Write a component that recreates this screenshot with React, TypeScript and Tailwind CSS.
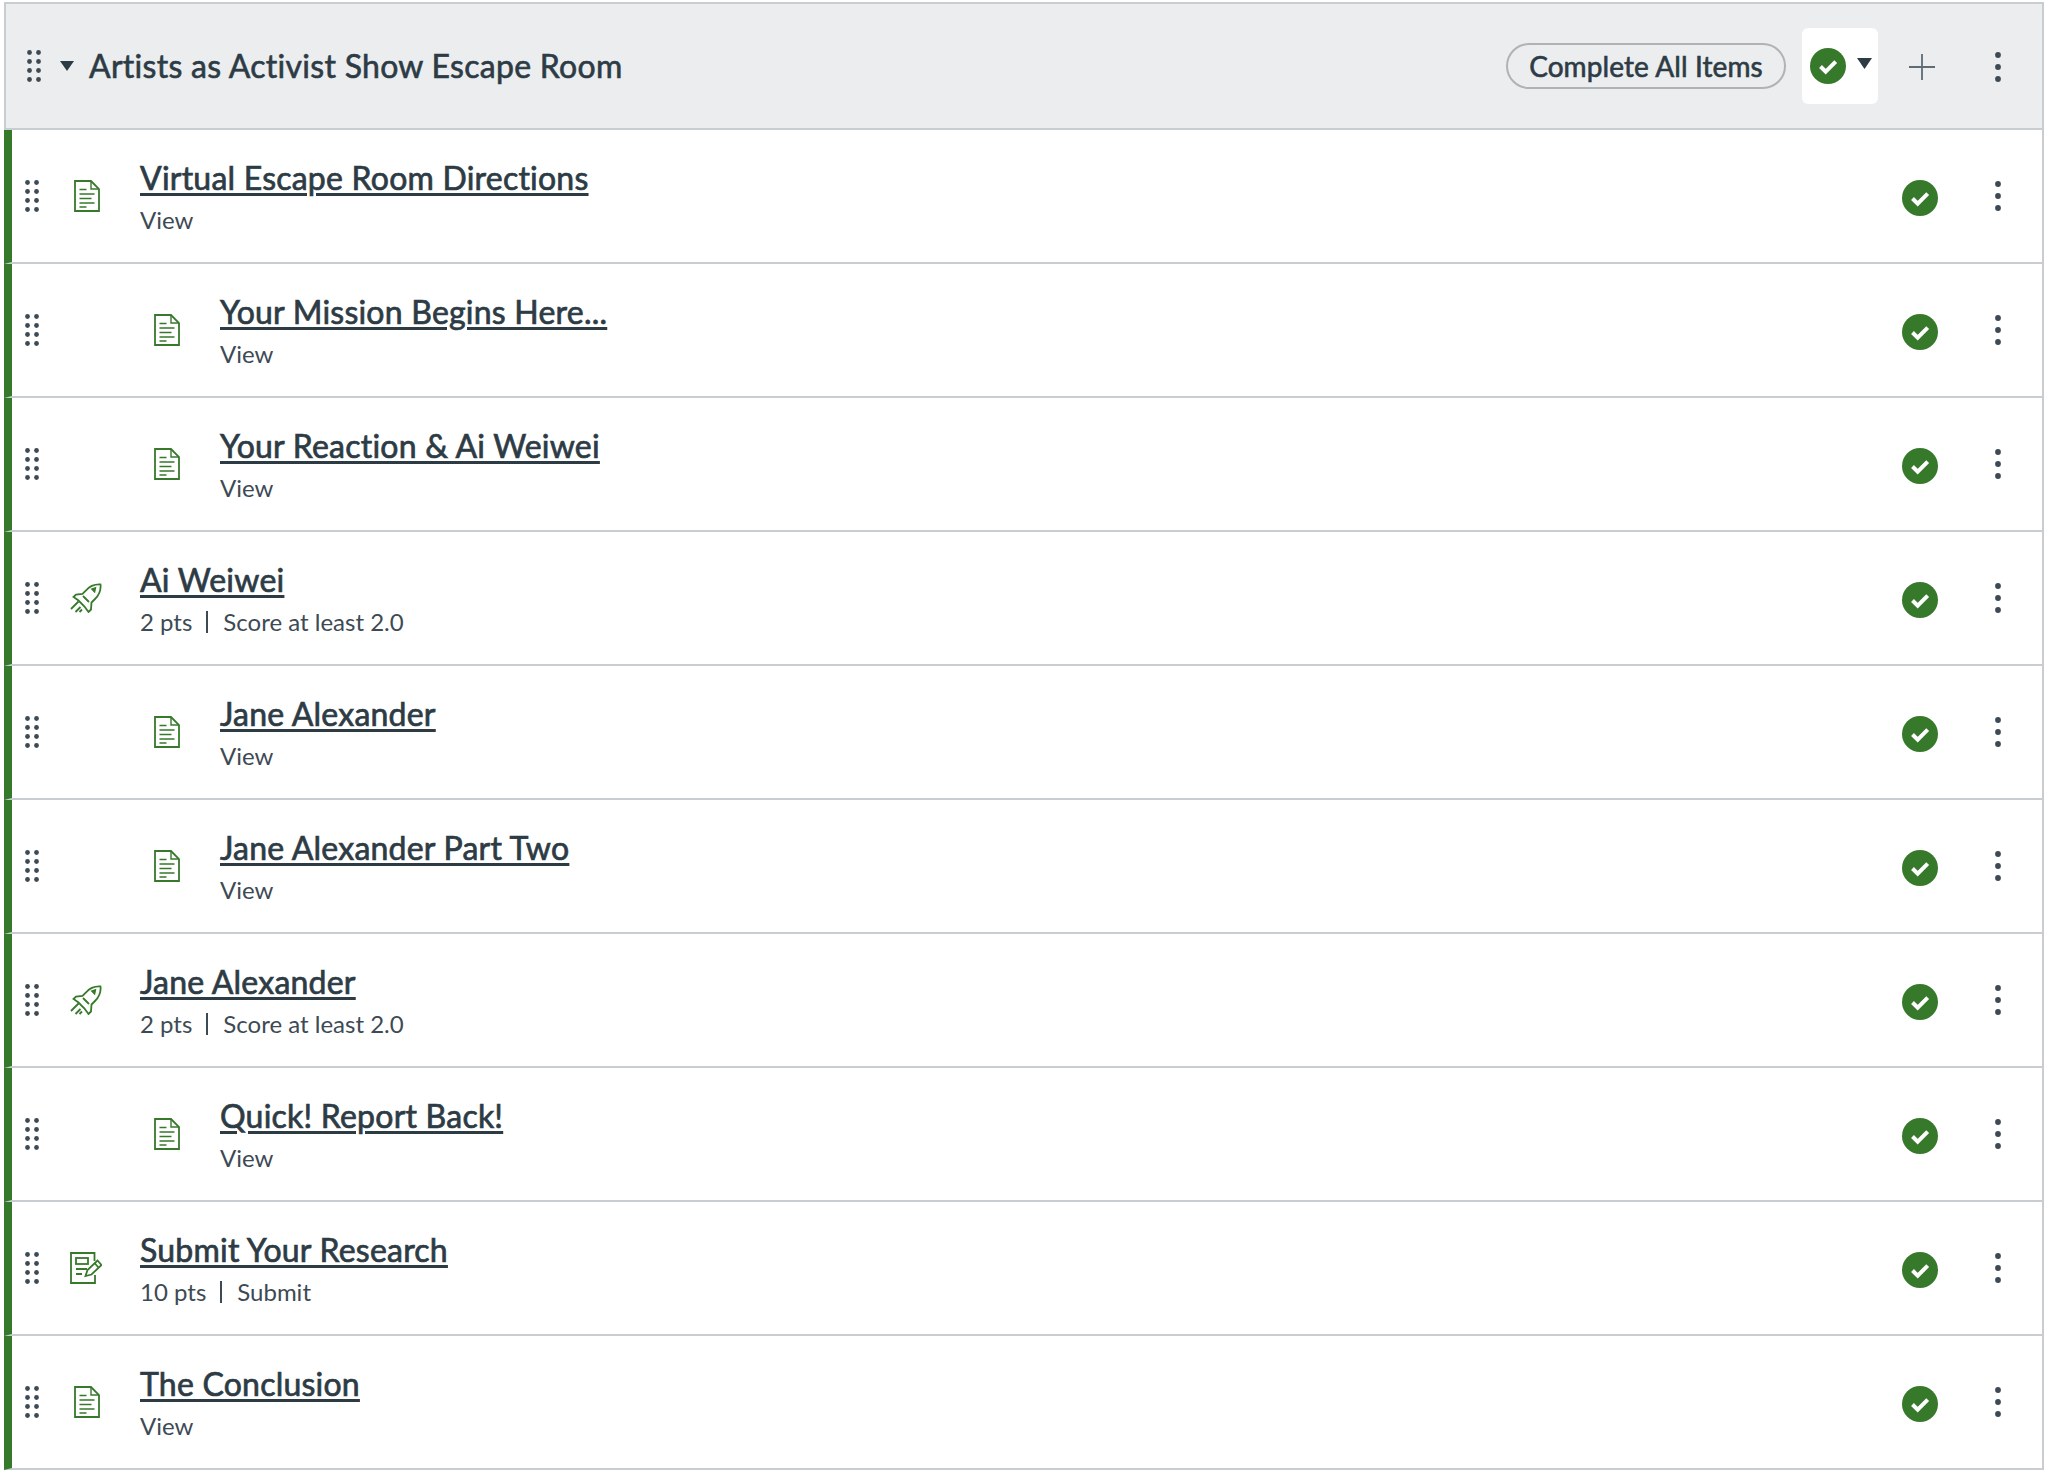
import React from 'react';

type Item = {
  title: string;
  kind: 'page' | 'quiz' | 'assignment';
  indent?: boolean;
  meta: string[];
};

const items: Item[] = [
  { title: 'Virtual Escape Room Directions', kind: 'page', meta: ['View'] },
  { title: 'Your Mission Begins Here...', kind: 'page', indent: true, meta: ['View'] },
  { title: 'Your Reaction & Ai Weiwei', kind: 'page', indent: true, meta: ['View'] },
  { title: 'Ai Weiwei', kind: 'quiz', meta: ['2 pts', 'Score at least 2.0'] },
  { title: 'Jane Alexander', kind: 'page', indent: true, meta: ['View'] },
  { title: 'Jane Alexander Part Two', kind: 'page', indent: true, meta: ['View'] },
  { title: 'Jane Alexander', kind: 'quiz', meta: ['2 pts', 'Score at least 2.0'] },
  { title: 'Quick! Report Back!', kind: 'page', indent: true, meta: ['View'] },
  { title: 'Submit Your Research', kind: 'assignment', meta: ['10 pts', 'Submit'] },
  { title: 'The Conclusion', kind: 'page', meta: ['View'] },
];

const DragHandle = () => (
  <svg viewBox="0 0 14 32" className="h-[32px] w-[14px] shrink-0 fill-[#3d4a54]">
    {[2.5, 11.5].map((x) =>
      [4, 13, 22, 31].map((y) => <circle key={`${x}-${y}`} cx={x} cy={y - 1.5} r="2.4" />),
    )}
  </svg>
);

const Kebab = () => (
  <svg viewBox="0 0 6 30" className="h-[30px] w-[6px] shrink-0 fill-[#3d4a54]">
    <circle cx="3" cy="3" r="2.9" />
    <circle cx="3" cy="15" r="2.9" />
    <circle cx="3" cy="27" r="2.9" />
  </svg>
);

const CheckBadge = () => (
  <svg viewBox="0 0 36 36" className="h-[36px] w-[36px] shrink-0">
    <circle cx="18" cy="18" r="18" fill="#37792b" />
    <path d="M10.5 18.5l5.2 5.2 10-10" fill="none" stroke="#fff" strokeWidth="4" />
  </svg>
);

const PageIcon = () => (
  <svg viewBox="0 0 26 32" className="h-[32px] w-[26px] fill-none stroke-[#37792b]" strokeWidth="1.800">
    <path d="M1 1h16l8 8v22H1z" />
    <path d="M17 1v8h8" strokeWidth="1.4" />
    <path d="M5.5 9.5h7M5.5 14h15M5.5 18.500h12M5.500 23h15M5.500 27h7" strokeWidth="1.600" />
  </svg>
);

const QuizIcon = () => (
  <svg viewBox="0 0 32 30" className="-ml-[2px] h-[30px] w-[32px] fill-none stroke-[#37792b]" strokeWidth="1.800">
    <path d="M30.500 1.500c.6 5.500-1 10-5.500 14.500l-3.500 3.500-.5 7-2.500 2.500-4-5.500-6-6-5-3.500 2.500-2.500 6.500-.5 3.500-3.500C19.800 3 25 1.200 30.500 1.500z" />
    <path d="M24.500 8.500l-2.300-2.300 3-1z" fill="#37792b" />
    <path d="M13 13l6 6M1 26l7.500-7.500M5.500 29l5-5M9.500 29l2.500-2.500" />
  </svg>
);

const AssignmentIcon = () => (
  <svg viewBox="0 0 32 32" className="-ml-[2px] h-[32px] w-[32px] fill-none stroke-[#37792b]" strokeWidth="1.800">
    <path d="M24.500 9V1H1v30h24v-8" />
    <rect x="6" y="6" width="12" height="6" />
    <path d="M6 17h11M6 22h6" />
    <path d="M15.500 24l2-6 10-9.500 4 4.500-10 9.500z" />
    <path d="M24.500 11l4 4.500" />
  </svg>
);

const ItemIcon = ({ kind }: { kind: Item['kind'] }) => {
  if (kind === 'quiz') return <QuizIcon />;
  if (kind === 'assignment') return <AssignmentIcon />;
  return <PageIcon />;
};

const ModuleRow = ({ item }: { item: Item }) => (
  <div className="flex h-[134px] items-center border-b-2 border-l-8 border-r-2 border-b-[#c7cdd1] border-l-[#37792b] border-r-[#c7cdd1] pl-[13px] pr-[41px]">
    <DragHandle />
    <div className={item.indent ? 'ml-[112px] flex w-[32px] justify-center' : 'ml-[32px] flex w-[32px] justify-center'}>
      <ItemIcon kind={item.kind} />
    </div>
    <div className="ml-[37px] flex flex-col">
      <a className="text-[32px] leading-[40px] tracking-[0.22px] text-[#2d3b45] underline decoration-[3px] underline-offset-[3px] [-webkit-text-stroke:0.7px_#2d3b45]">
        {item.title}
      </a>
      <div className="mt-[7px] flex text-[24px] leading-[30px] text-[#3d4a54]">
        {item.meta.map((m, i) => (
          <span key={m} className={i > 0 ? 'my-[4px] ml-[14px] border-l-2 border-[#3d4a54] pl-[15px] leading-[22px]' : ''}>
            {m}
          </span>
        ))}
      </div>
    </div>
    <div className="ml-auto flex items-center gap-[57px]">
      <div className="mt-[3px]">
        <CheckBadge />
      </div>
      <Kebab />
    </div>
  </div>
);

export default function App() {
  return (
    <div className="min-h-[1482px] bg-white pl-1 pr-[12px] pt-[2px] font-['Lato',sans-serif]">
      <div className="flex h-[128px] items-center border-2 border-[#c7cdd1] bg-[#ebedef] pl-[21px] pr-[41px]">
        <DragHandle />
        <svg viewBox="0 0 14 10" className="ml-[19px] h-[10px] w-[14px] fill-[#2d3b45]">
          <path d="M0 0h14L7 10z" />
        </svg>
        <h2 className="ml-[15px] text-[32px] leading-none tracking-[0.28px] text-[#2d3b45] [-webkit-text-stroke:0.6px_#2d3b45]">
          Artists as Activist Show Escape Room
        </h2>
        <div className="ml-auto flex items-center">
          <button className="flex h-[46px] w-[280px] items-center justify-center rounded-full border-2 border-[#b0b3b5] text-[28px] tracking-[0.1px] text-[#2d3b45] [-webkit-text-stroke:0.6px_#2d3b45]">
            Complete All Items
          </button>
          <div className="ml-[16px] flex h-[76px] w-[76px] items-center rounded-md bg-white pl-[8px]">
            <CheckBadge />
            <svg viewBox="0 0 15 11" className="mb-[5px] ml-[11px] h-[11px] w-[15px] fill-[#2d3b45]">
              <path d="M0 0h15L7.500 11z" />
            </svg>
          </div>
          <svg viewBox="0 0 26 26" className="ml-[31px] mt-[2px] h-[26px] w-[26px] stroke-[#5f6b75]" strokeWidth="1.800">
            <path d="M13 0v26M0 13h26" />
          </svg>
          <div className="ml-[60px] mt-[2px] flex">
            <Kebab />
          </div>
        </div>
      </div>
      {items.map((item, i) => (
        <ModuleRow key={i} item={item} />
      ))}
    </div>
  );
}
